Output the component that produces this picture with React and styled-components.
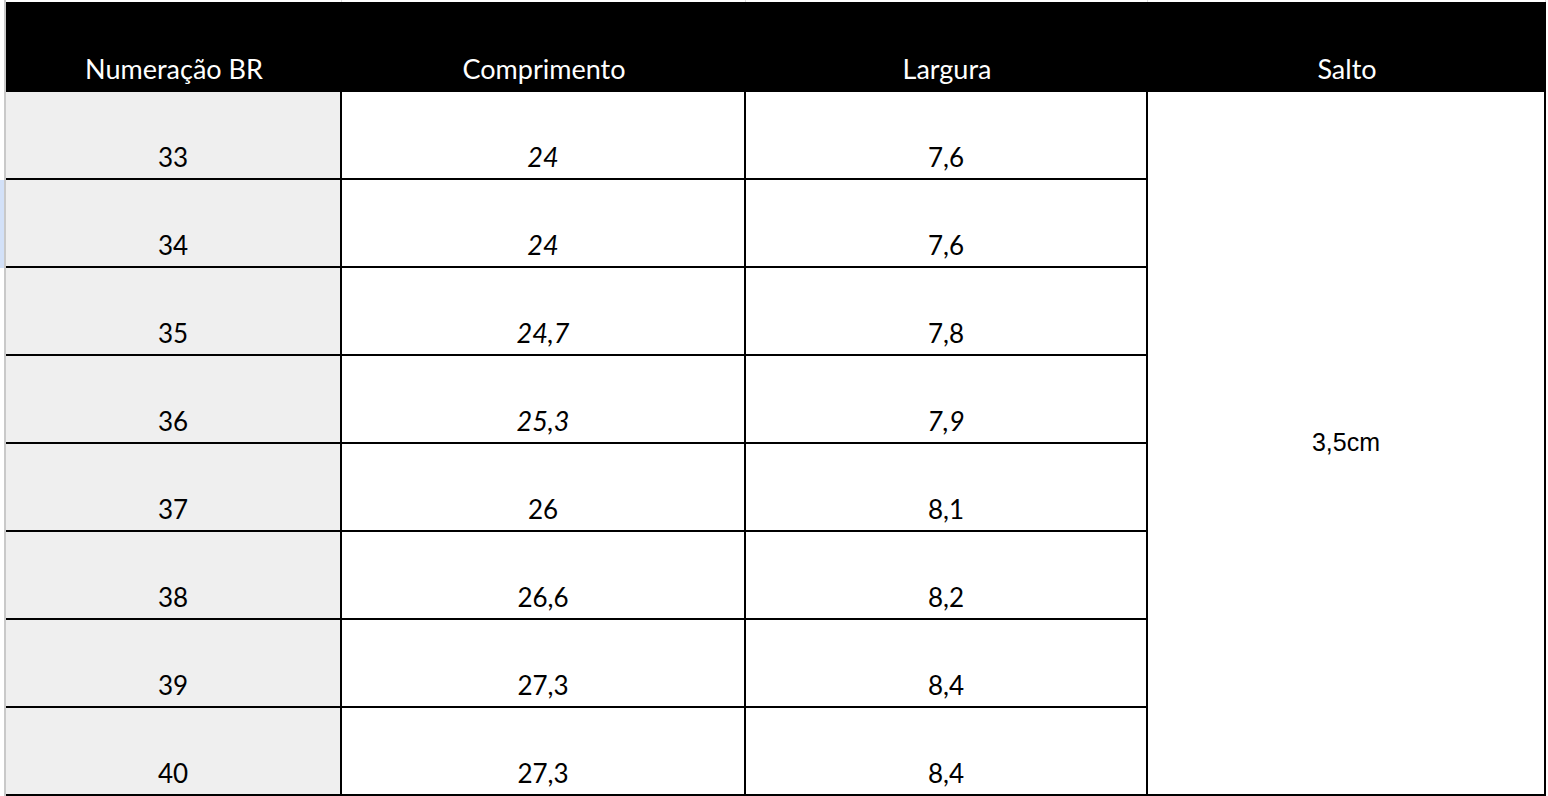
import React from "react";
import styled, { createGlobalStyle } from "styled-components";

const Global = createGlobalStyle`
  html, body { margin: 0; padding: 0; background: #ffffff; }
  body { font-family: Lato, "Open Sans", sans-serif; overflow: hidden; }
`;

const ROW_H = 88;

const Page = styled.div`
  display: flex;
  width: 1548px;
  height: 796px;
  overflow: hidden;
`;

const Gutter = styled.div`
  display: grid;
  grid-template-rows: 2px 90px repeat(8, ${ROW_H}px);
  width: 4px;
  border-right: 2px solid #c9c9c9;
`;

const GutterCell = styled.div`
  background: ${(p) => (p.$selected ? "#d3e1f8" : "#ffffff")};
`;

const Sheet = styled.div`
  display: grid;
  grid-template-columns: 336px 404px 402px 398px;
  grid-template-rows: 2px 90px repeat(8, ${ROW_H}px);
`;

const TopGrid = styled.div`
  border-right: 1px solid #dedede;
  background: #ffffff;
`;

const HeadCell = styled.div`
  background: #000000;
  color: #ffffff;
  font-family: Lato, "Open Sans", sans-serif;
  font-size: 27px;
  line-height: 1.2;
  display: flex;
  align-items: flex-end;
  justify-content: center;
  padding-bottom: 7px;
`;

const Cell = styled.div`
  background: ${(p) => (p.$shade ? "#efefef" : "#ffffff")};
  border-right: 2px solid #000000;
  border-bottom: 2px solid #000000;
  font-family: Lato, "Open Sans", sans-serif;
  font-size: ${(p) => (p.$italic ? "27px" : "26px")};
  line-height: 1.2;
  font-style: ${(p) => (p.$italic ? "italic" : "normal")};
  color: #000000;
  display: flex;
  align-items: flex-end;
  justify-content: center;
  padding-bottom: 5px;
`;

const MergedCell = styled.div`
  grid-column: 4;
  grid-row: 3 / span 8;
  border-right: 2px solid #000000;
  border-bottom: 2px solid #000000;
  display: flex;
  align-items: center;
  justify-content: center;
  font-family: "Liberation Sans", Arial, sans-serif;
  font-size: 25px;
  color: #000000;
  padding-bottom: 2px;
`;

const rows = [
  { n: "33", c: "24", ci: true, l: "7,6" },
  { n: "34", c: "24", ci: true, l: "7,6" },
  { n: "35", c: "24,7", ci: true, l: "7,8" },
  { n: "36", c: "25,3", ci: true, l: "7,9", li: true },
  { n: "37", c: "26", l: "8,1" },
  { n: "38", c: "26,6", l: "8,2" },
  { n: "39", c: "27,3", l: "8,4" },
  { n: "40", c: "27,3", l: "8,4" },
];

const headers = ["Numeração BR", "Comprimento", "Largura", "Salto"];

export default function App() {
  return (
    <>
      <Global />
      <Page>
        <Gutter>
          <GutterCell />
          <GutterCell />
          {rows.map((r, i) => (
            <GutterCell key={r.n} $selected={i === 1} />
          ))}
        </Gutter>
        <Sheet>
          {headers.map((h) => (
            <TopGrid key={"t" + h} />
          ))}
          {headers.map((h) => (
            <HeadCell key={h}>{h}</HeadCell>
          ))}
          {rows.map((r) => (
            <React.Fragment key={r.n}>
              <Cell $shade>{r.n}</Cell>
              <Cell $italic={r.ci}>{r.c}</Cell>
              <Cell $italic={r.li}>{r.l}</Cell>
            </React.Fragment>
          ))}
          <MergedCell>3,5cm</MergedCell>
        </Sheet>
      </Page>
    </>
  );
}
